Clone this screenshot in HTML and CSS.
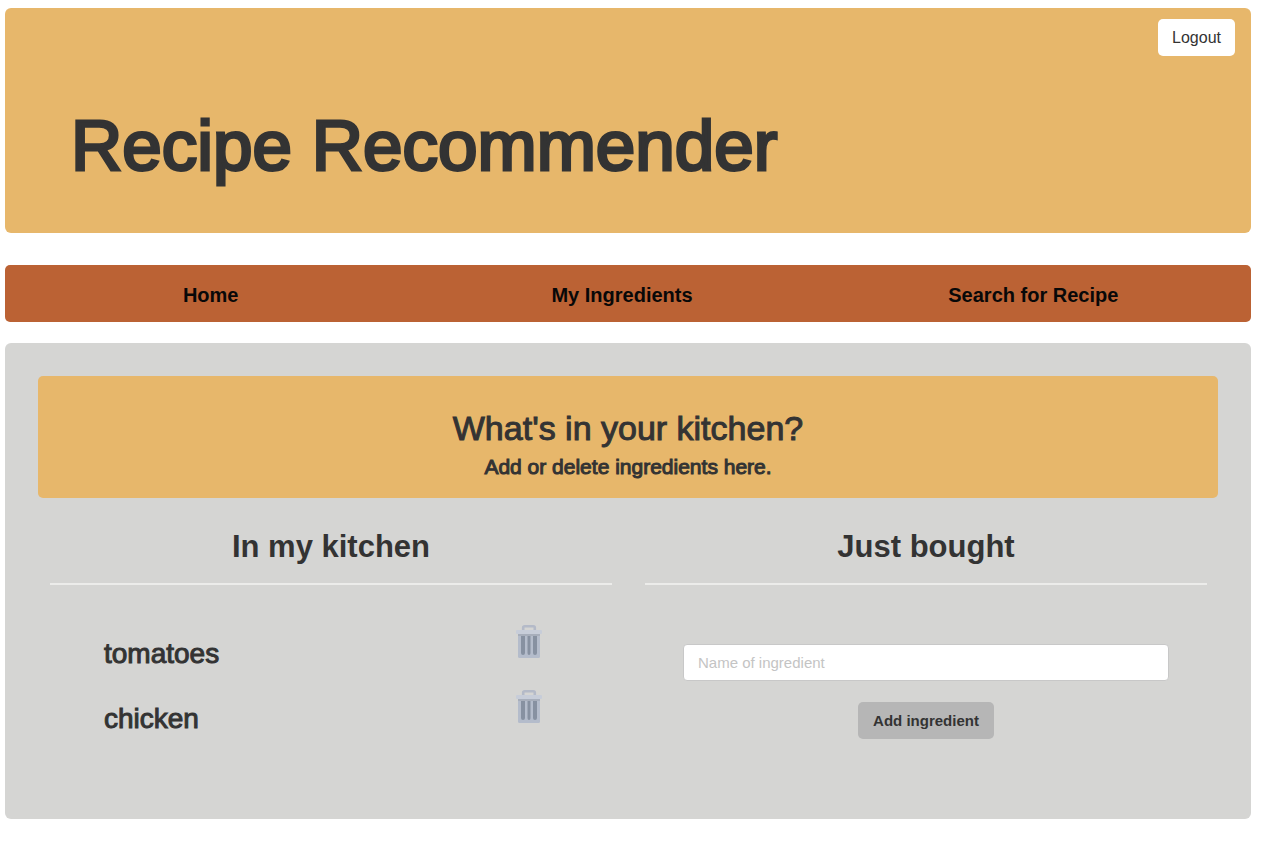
FILE: index.html
```html
<!DOCTYPE html>
<html lang="en">
<head>
<meta charset="utf-8">
<title>Recipe Recommender</title>
<link rel="stylesheet" href="styles.css">
</head>
<body class="page">
<svg class="sprite" aria-hidden="true">
  <symbol id="trash" viewBox="0 0 26 34">
    <path d="M7.200 6V2.800a1.500 1.500 0 0 1 1.500-1.500h8.600a1.500 1.500 0 0 1 1.500 1.500V6" fill="none" stroke="#b4bac8" stroke-width="2.600"/>
    <path d="M2 8h22v23.500a1.500 1.500 0 0 1-1.500 1.500h-19A1.500 1.500 0 0 1 2 31.500z" fill="#b4bccb"/>
    <path d="M2 8h22v3H2z" fill="#a7aebb"/>
    <path d="M5 11h4v17a2 2 0 0 1-4 0zM11.500 11h3v17a1.500 2 0 0 1-3 0zM17 11h4v17a2 2 0 0 1-4 0z" fill="#8791a1"/>
    <rect x="0" y="5" width="26" height="4" rx="1" fill="#c7cdd9"/>
  </symbol>
</svg>
<header class="banner">
  <button class="button logout" type="button">Logout</button>
  <h1 class="title">Recipe Recommender</h1>
</header>
<nav class="nav">
  <a class="nav-link" href="#home">Home</a>
  <a class="nav-link" href="#ingredients">My Ingredients</a>
  <a class="nav-link" href="#search">Search for Recipe</a>
</nav>
<main class="content">
  <section class="intro">
    <h2 class="intro-title">What's in your kitchen?</h2>
    <p class="intro-text">Add or delete ingredients here.</p>
  </section>
  <div class="columns">
    <section>
      <h3 class="column-title">In my kitchen</h3>
      <ul class="list">
        <li class="item">
          <span class="item-name">tomatoes</span>
          <button class="delete" type="button" aria-label="Delete tomatoes"><svg class="trash"><use href="#trash"/></svg></button>
        </li>
        <li class="item">
          <span class="item-name">chicken</span>
          <button class="delete" type="button" aria-label="Delete chicken"><svg class="trash"><use href="#trash"/></svg></button>
        </li>
      </ul>
    </section>
    <section>
      <h3 class="column-title">Just bought</h3>
      <form class="form">
        <input class="field" type="text" placeholder="Name of ingredient" aria-label="Name of ingredient">
        <button class="button add" type="submit">Add ingredient</button>
      </form>
    </section>
  </div>
</main>
</body>
</html>
```
FILE: styles.css
```css
* { box-sizing: border-box; }

.page {
  margin: 8px 11px 27px 5px;
  background: #fff;
  color: #333;
  font-family: "Liberation Sans", Arial, sans-serif;
  font-size: 16px;
}

.sprite { display: none; }

.banner {
  display: flex;
  flex-direction: column;
  padding: 11px 16px 48px 66px;
  border-radius: 6px;
  background: #e7b76b;
}

.button {
  height: 37px;
  padding: 0 14px;
  border: 0;
  border-radius: 5px;
  color: #333;
  font-family: inherit;
  font-size: 16px;
}

.logout { align-self: flex-end; background: #fff; }

.title {
  margin: 50px 0 0;
  font-size: 71px;
  font-weight: 400;
  line-height: 79px;
  -webkit-text-stroke: 3px #333;
}

.nav {
  display: grid;
  grid-template-columns: repeat(3, 1fr);
  margin-top: 32px;
  padding: 18px 12px 15px 0;
  border-radius: 5px;
  background: #bb6234;
}

.nav-link {
  color: #080808;
  font-size: 20px;
  font-weight: 700;
  line-height: 24px;
  text-align: center;
  text-decoration: none;
}

.content {
  margin-top: 21px;
  padding: 33px 33px 64px;
  border-radius: 6px;
  background: #d5d5d3;
}

.intro {
  padding: 32px 16px 19px;
  border-radius: 5px;
  background: #e7b76b;
  text-align: center;
}

.intro-title {
  margin: 0;
  font-size: 34px;
  font-weight: 400;
  line-height: 40px;
  -webkit-text-stroke: 1px #333;
}

.intro-text {
  margin: 7px 0 0;
  font-size: 21px;
  line-height: 24px;
  -webkit-text-stroke: 1px #333;
}

.columns {
  display: grid;
  grid-template-columns: 1fr 1fr;
  gap: 33px;
  padding: 32px 11px 0 12px;
}

.column-title {
  margin: 0;
  padding-bottom: 19px;
  border-bottom: 2px solid #ececea;
  font-size: 31px;
  font-weight: 700;
  line-height: 34px;
  text-align: center;
}

.list {
  margin: 0;
  padding: 40px 70px 0 54px;
  list-style: none;
}

.item {
  display: flex;
  align-items: flex-start;
  justify-content: space-between;
  height: 65px;
}

.item-name {
  padding-top: 13px;
  font-size: 28px;
  line-height: 32px;
  -webkit-text-stroke: 1px #333;
}

.delete {
  padding: 0;
  border: 0;
  background: none;
}

.trash { display: block; width: 26px; height: 34px; }

.form {
  display: flex;
  flex-direction: column;
  align-items: center;
  gap: 21px;
  padding: 59px 38px 0;
}

.field {
  width: 100%;
  height: 37px;
  padding: 0 14px;
  border: 1px solid #c8c8c8;
  border-radius: 4px;
  background: #fff;
  color: #333;
  font-family: inherit;
  font-size: 15px;
}

.field::placeholder { color: #c4c4c4; }

.add { padding: 0 15px; background: #b6b6b6; font-size: 15px; font-weight: 700; }
```
